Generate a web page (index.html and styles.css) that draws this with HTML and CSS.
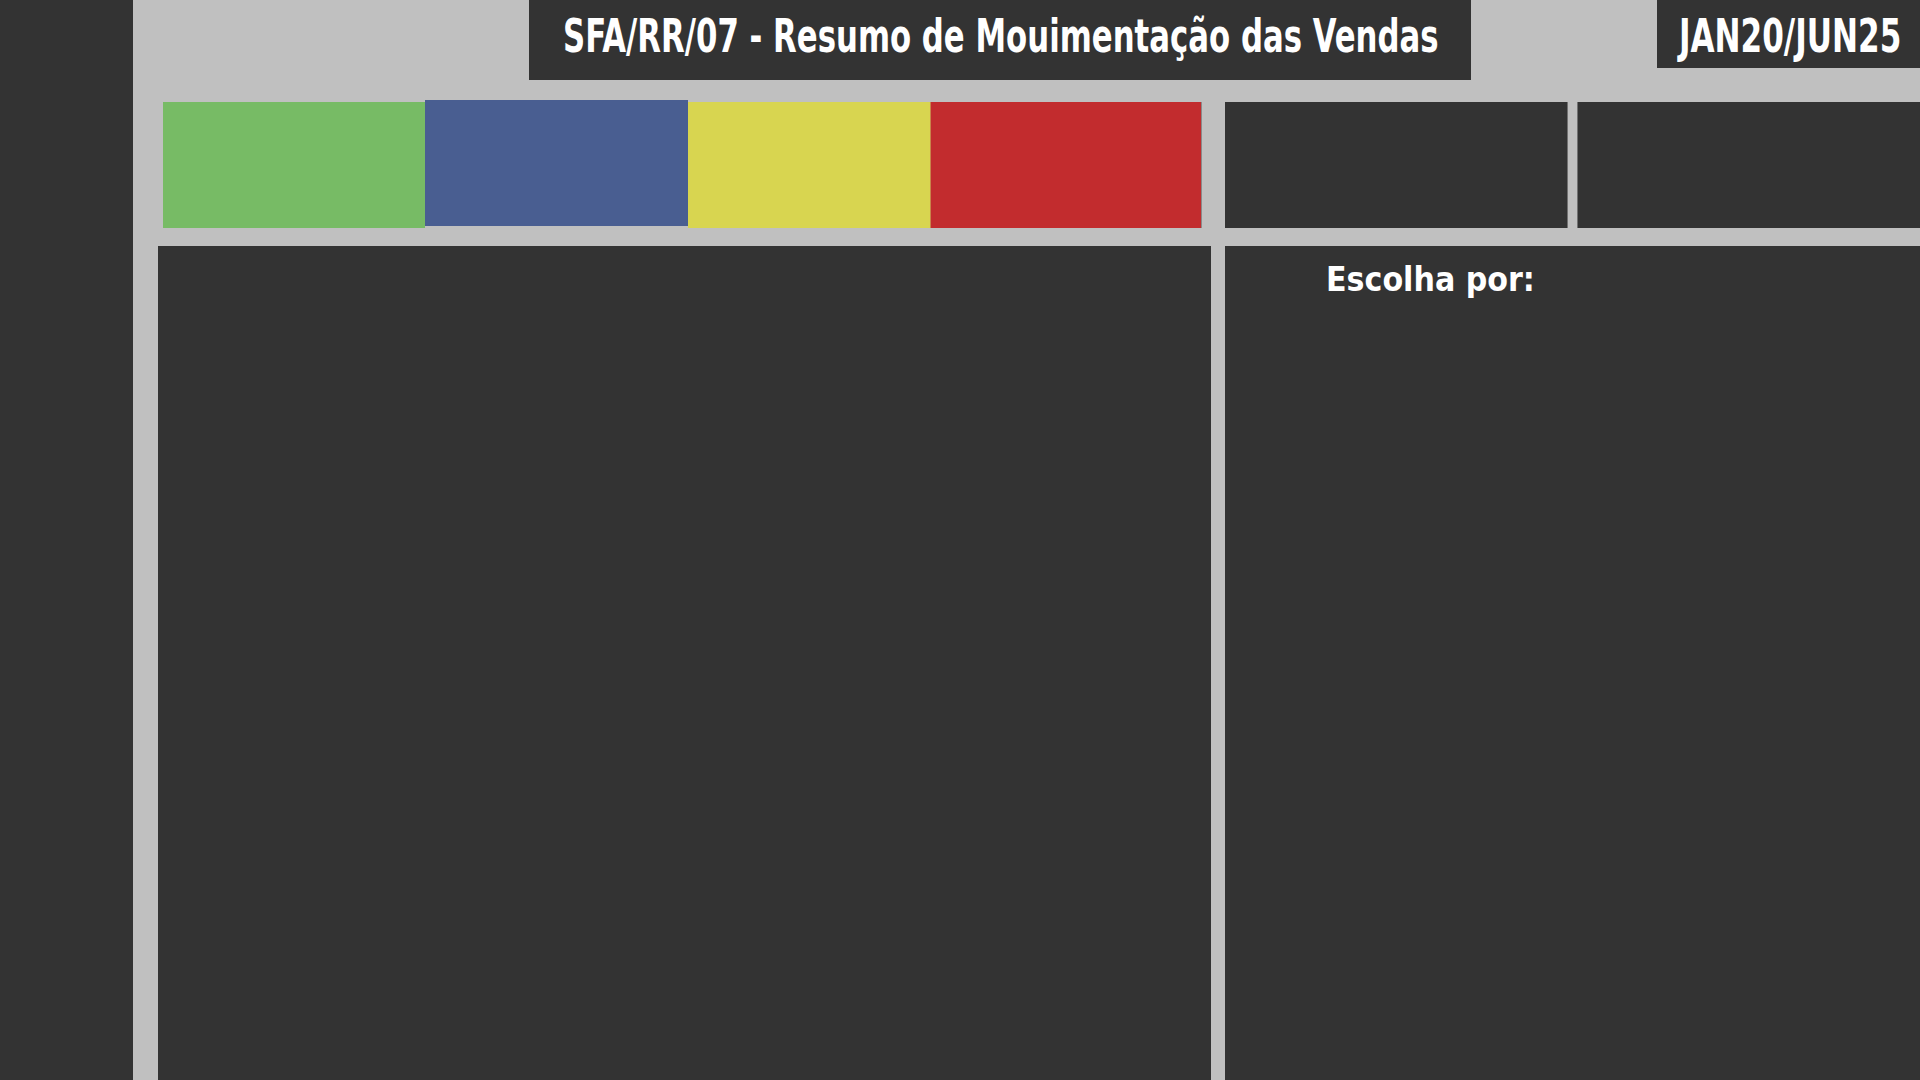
FILE: index.html
```html
<!DOCTYPE html>
<html lang="pt">
<head>
<meta charset="utf-8">
<title>SFA/RR/07 - Resumo de Movimentação das Vendas</title>
<link rel="stylesheet" href="styles.css">
</head>
<body>
<div class="page">
  <aside class="sidebar"></aside>
  <main class="main">
    <header class="header">
      <div class="title-box"><span class="title-text title-main">SFA/RR/07 - Resumo de Mouimentação das Vendas</span></div>
      <div class="date-box"><span class="title-text">JAN20/JUN25</span></div>
    </header>
    <section class="kpi-row">
      <div class="strip">
        <div class="seg seg-green"></div>
        <div class="seg seg-blue"></div>
        <div class="seg seg-yellow"></div>
        <div class="seg seg-red"></div>
      </div>
      <div class="card card-a"></div>
      <div class="card card-b"></div>
    </section>
    <section class="panels">
      <div class="panel panel-left"></div>
      <div class="panel panel-right">
        <h2 class="choose">Escolha por:</h2>
      </div>
    </section>
  </main>
</div>
</body>
</html>
```
FILE: styles.css
```css
* { box-sizing: border-box; }
html, body { margin: 0; padding: 0; }
body {
  width: 1920px;
  height: 1080px;
  overflow: hidden;
  background: #c0c0c0;
  font-family: "DejaVu Sans", "Liberation Sans", sans-serif;
  font-stretch: condensed;
  color: #ffffff;
}
.page {
  display: grid;
  grid-template-columns: 133px 1fr;
  height: 1080px;
}
.sidebar { background: #333333; }
.main {
  display: flex;
  flex-direction: column;
  min-width: 0;
}
.header {
  display: flex;
  align-items: flex-start;
  height: 102px;
}
.title-box {
  margin-left: 396px;
  width: 942px;
  height: 80px;
  background: #333333;
  padding: 12px 0 0 34px;
  white-space: nowrap;
}
.date-box {
  margin-left: auto;
  width: 263px;
  height: 68px;
  background: #333333;
  padding: 12px 0 0 22px;
  white-space: nowrap;
}
.title-text {
  display: inline-block;
  font-weight: 700;
  font-size: 47px;
  line-height: 1;
  transform: scaleX(0.735);
  transform-origin: left top;
}
.title-main { transform: scaleX(0.728); }
.kpi-row {
  display: flex;
  align-items: flex-start;
  height: 144px;
  padding-left: 30px;
}
.strip {
  display: flex;
  align-items: flex-start;
  height: 126px;
  margin-right: 23px;
}
.seg { height: 126px; }
.seg-green { width: 262px; background: #77bb65; }
.seg-blue { width: 263px; background: #495e91; margin-top: -2px; }
.seg-yellow { width: 243px; background: #d8d550; border-right: 1px solid #c9844a; }
.seg-red { width: 271px; background: #c22c2e; border-right: 1px solid #8a8a8a; }
.card {
  width: 343px;
  height: 126px;
  background: #333333;
}
.card-a { border-right: 1px solid #727272; }
.card-b { margin-left: 9px; border-left: 1px solid #727272; }
.panels {
  display: flex;
  gap: 14px;
  padding-left: 25px;
  flex: 1;
}
.panel { background: #333333; height: 834px; }
.panel-left { width: 1053px; }
.panel-right { flex: 1; padding: 17px 0 0 101px; }
.choose {
  margin: 0;
  font-weight: 700;
  font-size: 33.5px;
  line-height: 1;
  white-space: nowrap;
}
```
